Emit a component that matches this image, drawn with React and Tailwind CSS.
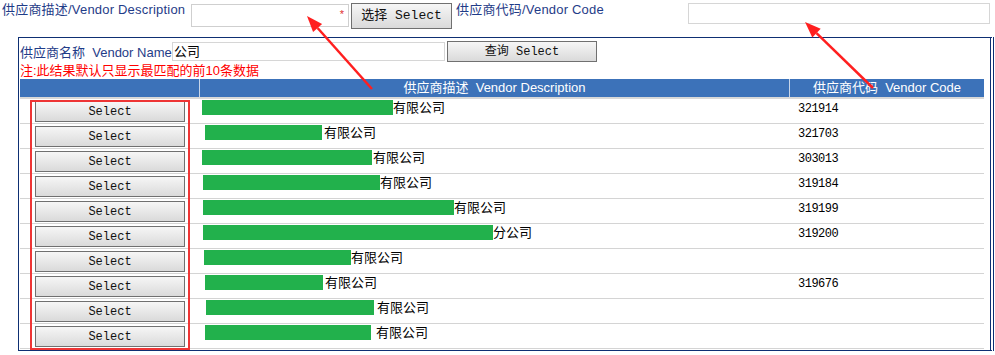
import React from 'react'

const ROWS = [
  { off: 2, w: 191, name: '有限公司', gap: 0, code: '321914' },
  { off: 5, w: 117, name: '有限公司', gap: 2, code: '321703' },
  { off: 2, w: 170, name: '有限公司', gap: 1, code: '303013' },
  { off: 3, w: 177, name: '有限公司', gap: 0, code: '319184' },
  { off: 3, w: 251, name: '有限公司', gap: 0, code: '319199' },
  { off: 3, w: 290, name: '分公司', gap: 0, code: '319200' },
  { off: 4, w: 147, name: '有限公司', gap: 0, code: '' },
  { off: 5, w: 118, name: '有限公司', gap: 2, code: '319676' },
  { off: 6, w: 168, name: '有限公司', gap: 3, code: '' },
  { off: 5, w: 166, name: '有限公司', gap: 5, code: '' },
]

const sans = "font-['Liberation_Sans','Noto_Sans_CJK_SC',sans-serif]"
const mono = "font-['Liberation_Mono','Noto_Sans_CJK_SC',monospace]"

function GrayButton({ className, children }) {
  return (
    <button
      type="button"
      className={`flex items-center justify-center border border-[#707070] bg-gradient-to-b from-[#f6f6f6] to-[#dadada] text-[12px] text-[#111] ${mono} ${className}`}
    >
      {children}
    </button>
  )
}

export default function App() {
  return (
    <div className={`relative w-[995px] h-[355px] bg-white overflow-hidden ${sans}`}>
      {/* top search line */}
      <div className="flex items-start h-[37px]">
        <span className="shrink-0 whitespace-nowrap ml-[2px] mt-[1px] w-[189px] text-[13px] leading-[18px] tracking-[0.2px] text-[#1f3c88]">供应商描述/Vendor Description</span>
        <div className="relative mt-[4px] w-[158px] h-[23px] border border-[#cfcfcf]">
          <span className="absolute right-[4px] top-[3px] text-[11px] leading-[12px] text-[#e03030]">*</span>
        </div>
        <GrayButton className="ml-[2px] mt-[3px] w-[101px] h-[26px] text-[13px]">选择 Select</GrayButton>
        <span className="shrink-0 whitespace-nowrap ml-[4px] mt-[1px] text-[13px] leading-[18px] tracking-[0.2px] text-[#1f3c88]">供应商代码/Vendor Code</span>
        <div className="ml-auto mr-[5px] mt-[3px] w-[302px] h-[21px] border border-[#d6d6d6]" />
      </div>

      {/* result panel */}
      <div className="ml-[18px] w-[976px] h-[314px] border border-[#0e2f73] border-r-[4px] border-r-[#0e2f73] [border-right-style:double]">
        <div className="flex items-start mt-[3px] h-[21px]">
          <span className="shrink-0 whitespace-nowrap ml-[1px] mt-[3px] w-[152px] text-[13px] leading-[18px] text-[#1f3c88]">供应商名称&nbsp; Vendor Name</span>
          <div className="mt-[1px] w-[273px] h-[19px] border border-[#d6d6d6] pl-[1px] text-[13px] leading-[17px] text-black">公司</div>
          <GrayButton className="ml-[2px] w-[150px] h-[21px] text-[12px]">查询 Select</GrayButton>
        </div>
        <div className="ml-[1px] h-[17px] text-[13px] leading-[17px] text-[#ff0000]">注:此结果默认只显示最匹配的前10条数据</div>

        <div className="relative ml-[1px] w-[964px]">
          <div className="flex h-[20px] bg-[#3c72b9] border-b-2 border-[#d8d8d8] text-[13px] leading-[18px] text-white">
            <div className="w-[180px] border-r border-[#c8d6ea]" />
            <div className="w-[590px] text-center border-r border-[#c8d6ea]">供应商描述&nbsp; Vendor Description</div>
            <div className="flex-1 text-center">供应商代码&nbsp; Vendor Code</div>
          </div>
          {ROWS.map((r, i) => (
            <div key={i} className="flex h-[25px] border-b border-[#d4d4d4]">
              <div className="w-[180px] pl-[15px] pt-[2px]">
                <GrayButton className="w-[150px] h-[21px]">Select</GrayButton>
              </div>
              <div className="w-[590px] flex items-start pt-[1px]" style={{ paddingLeft: r.off }}>
                <div className="h-[15px] bg-[#22b14c]" style={{ width: r.w }} />
                <span className="text-[13px] leading-[16px] text-black" style={{ marginLeft: r.gap }}>{r.name}</span>
              </div>
              <div className={`flex-1 pl-[8px] pt-[3px] text-[12px] leading-[15px] tracking-[-0.5px] text-black ${mono}`}>{r.code}</div>
            </div>
          ))}
          {/* highlight box */}
          <div className="absolute left-[10px] top-[21px] w-[160px] h-[250px] border-2 border-[#ee3535] pointer-events-none" />
        </div>
      </div>

      {/* annotation arrows */}
      <svg className="absolute inset-0 pointer-events-none" width="995" height="355">
        <line x1="372" y1="89" x2="317.6" y2="28" stroke="#ff1f1f" strokeWidth="2.5" />
        <polygon points="307,16 322.1,24 313.1,32" fill="#ff1f1f" />
        <line x1="873" y1="88" x2="816.5" y2="33.1" stroke="#ff1f1f" strokeWidth="2.5" />
        <polygon points="805,22 820.7,28.8 812.3,37.4" fill="#ff1f1f" />
      </svg>
    </div>
  )
}
